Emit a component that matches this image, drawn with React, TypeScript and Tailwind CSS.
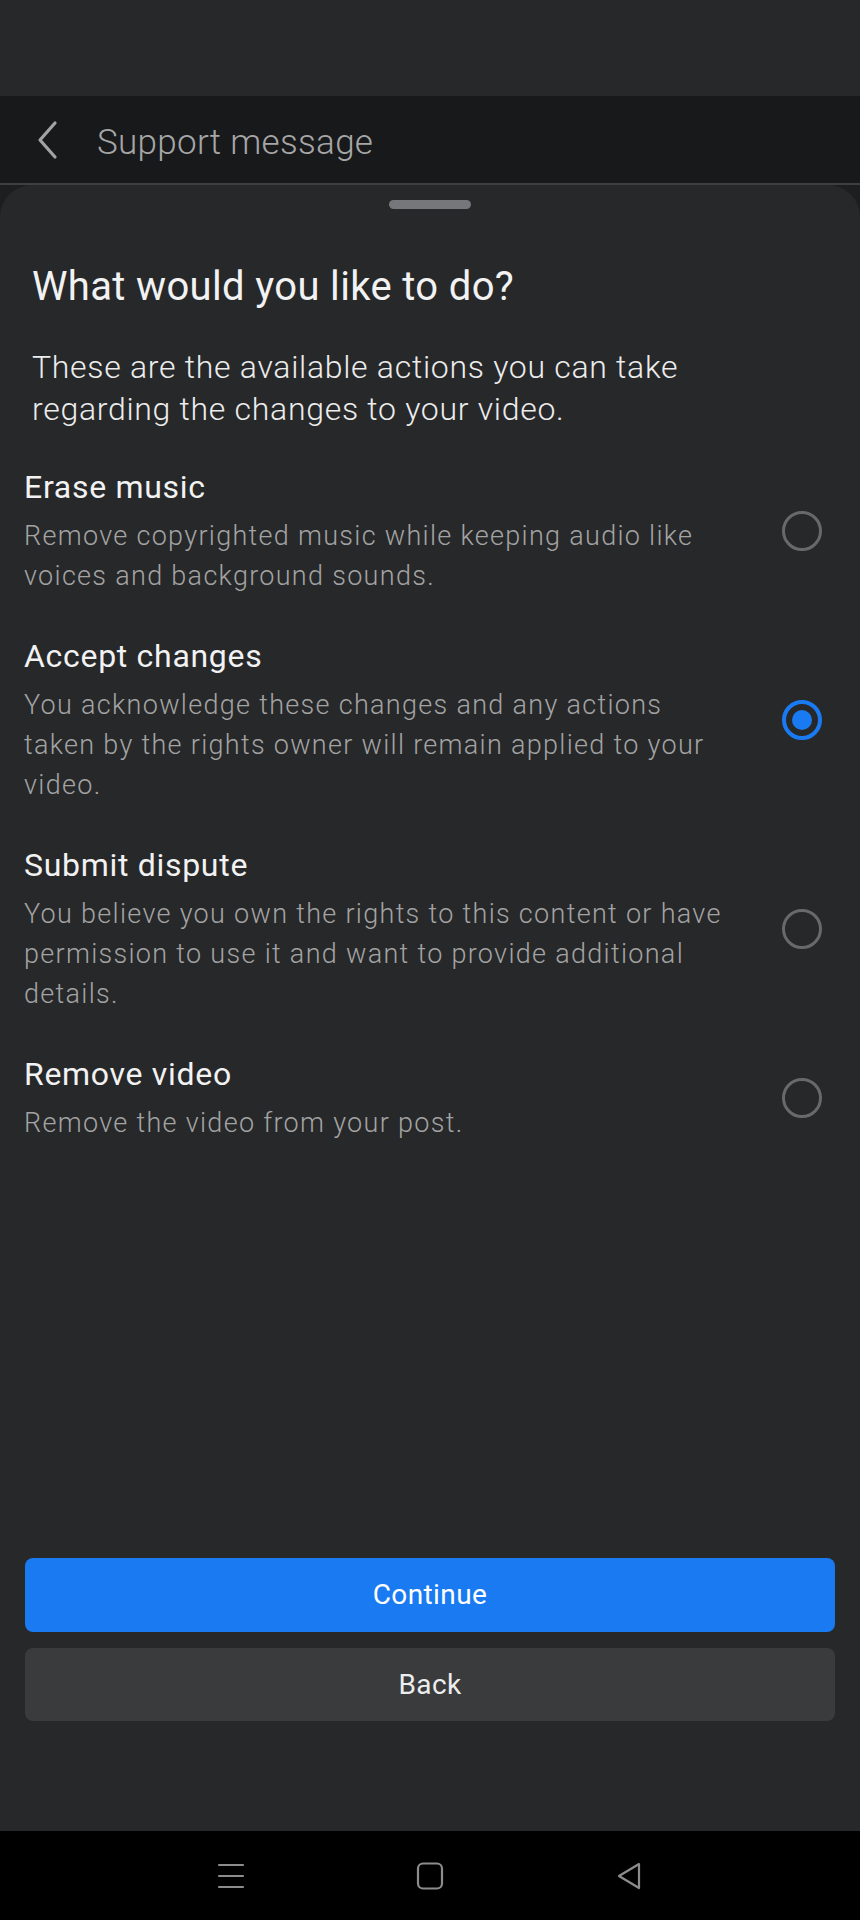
import React, { useState } from "react";

const options = [
  {
    title: "Erase music",
    lines: ["Remove copyrighted music while keeping audio like", "voices and background sounds."],
  },
  {
    title: "Accept changes",
    lines: [
      "You acknowledge these changes and any actions",
      "taken by the rights owner will remain applied to your",
      "video.",
    ],
  },
  {
    title: "Submit dispute",
    lines: [
      "You believe you own the rights to this content or have",
      "permission to use it and want to provide additional",
      "details.",
    ],
  },
  {
    title: "Remove video",
    lines: ["Remove the video from your post."],
  },
];

function Radio({ checked }: { checked: boolean }) {
  return checked ? (
    <div className="w-[40px] h-[40px] rounded-full border-[4px] border-[#1a7af2] flex items-center justify-center shrink-0">
      <div className="w-[20px] h-[20px] rounded-full bg-[#1a7af2]" />
    </div>
  ) : (
    <div className="w-[40px] h-[40px] rounded-full border-[3px] border-[#69696b] shrink-0" />
  );
}

export default function App() {
  const [selected, setSelected] = useState(1);
  return (
    <div
      className="w-[860px] h-[1920px] flex flex-col bg-[#1d1e20] overflow-hidden"
      style={{ fontFamily: "Roboto, 'Noto Sans', sans-serif" }}
    >
      <div className="h-[96px] bg-[#27282a] shrink-0" />
      <div className="h-[87px] bg-[#18191b] flex items-center shrink-0">
        <svg width="24" height="40" viewBox="0 0 24 40" className="ml-[35px]">
          <path d="M20 3 L5 20 L20 37" fill="none" stroke="#a3a3a3" strokeWidth="3.2" strokeLinecap="round" strokeLinejoin="round" />
        </svg>
        <span className="ml-[38px] mt-[5px] text-[35px] font-light text-[#a6a6a6] leading-none tracking-[0.3px]">Support message</span>
      </div>
      <div className="h-[2px] bg-[#3e3f41] shrink-0" />
      <div className="h-[1646px] bg-[#27282a] rounded-t-[32px] flex flex-col shrink-0">
        <div className="flex justify-center pt-[15px]">
          <div className="w-[82px] h-[9px] rounded-full bg-[#76777a]" />
        </div>
        <h1 className="mt-[54px] px-[32px] text-[40px] leading-[48px] text-[#f2f2f2] font-normal tracking-[0.35px]">
          What would you like to do?
        </h1>
        <p className="mt-[35px] px-[32px] text-[32px] leading-[42px] text-[#ececec] font-light tracking-[0.7px]">
          These are the available actions you can take
          <br />
          regarding the changes to your video.
        </p>
        <div className="mt-[35px] flex flex-col gap-[38px]">
          {options.map((o, i) => (
            <div
              key={o.title}
              className="flex items-center pl-[24px] pr-[38px] cursor-pointer"
              onClick={() => setSelected(i)}
            >
              <div className="flex-1">
                <div className="text-[32px] leading-[44px] text-[#f2f2f2] font-normal tracking-[0.7px]">{o.title}</div>
                <div className="mt-[7px] text-[27px] leading-[40px] text-[#a3a3a3] font-light tracking-[1.3px]">
                  {o.lines.map((l, j) => (
                    <div key={j} className="whitespace-nowrap">{l}</div>
                  ))}
                </div>
              </div>
              <Radio checked={selected === i} />
            </div>
          ))}
        </div>
        <div className="flex-1" />
        <div className="px-[25px] flex flex-col gap-[16px] pb-[110px]">
          <button className="h-[74px] rounded-[8px] bg-[#1a7af2] text-white text-[28px] font-normal tracking-[0.4px]">Continue</button>
          <button className="h-[73px] rounded-[8px] bg-[#3a3b3d] text-[#ededed] text-[28px] font-normal tracking-[0.4px]">Back</button>
        </div>
      </div>
      <div className="h-[89px] bg-black flex items-center justify-center shrink-0">
        <div className="flex items-center gap-[171px]">
          <svg width="28" height="26" viewBox="0 0 28 26">
            <path d="M2 2 H26 M2 13 H26 M2 24 H26" stroke="#8c8c8c" strokeWidth="2.2" strokeLinecap="round" />
          </svg>
          <svg width="28" height="28" viewBox="0 0 28 28">
            <rect x="2" y="1.5" width="24" height="25" rx="5" fill="none" stroke="#8c8c8c" strokeWidth="2.2" />
          </svg>
          <svg width="28" height="28" viewBox="0 0 28 28">
            <path d="M24 2 L4 14 L24 26 Z" fill="none" stroke="#8c8c8c" strokeWidth="2.2" strokeLinejoin="round" />
          </svg>
        </div>
      </div>
    </div>
  );
}
